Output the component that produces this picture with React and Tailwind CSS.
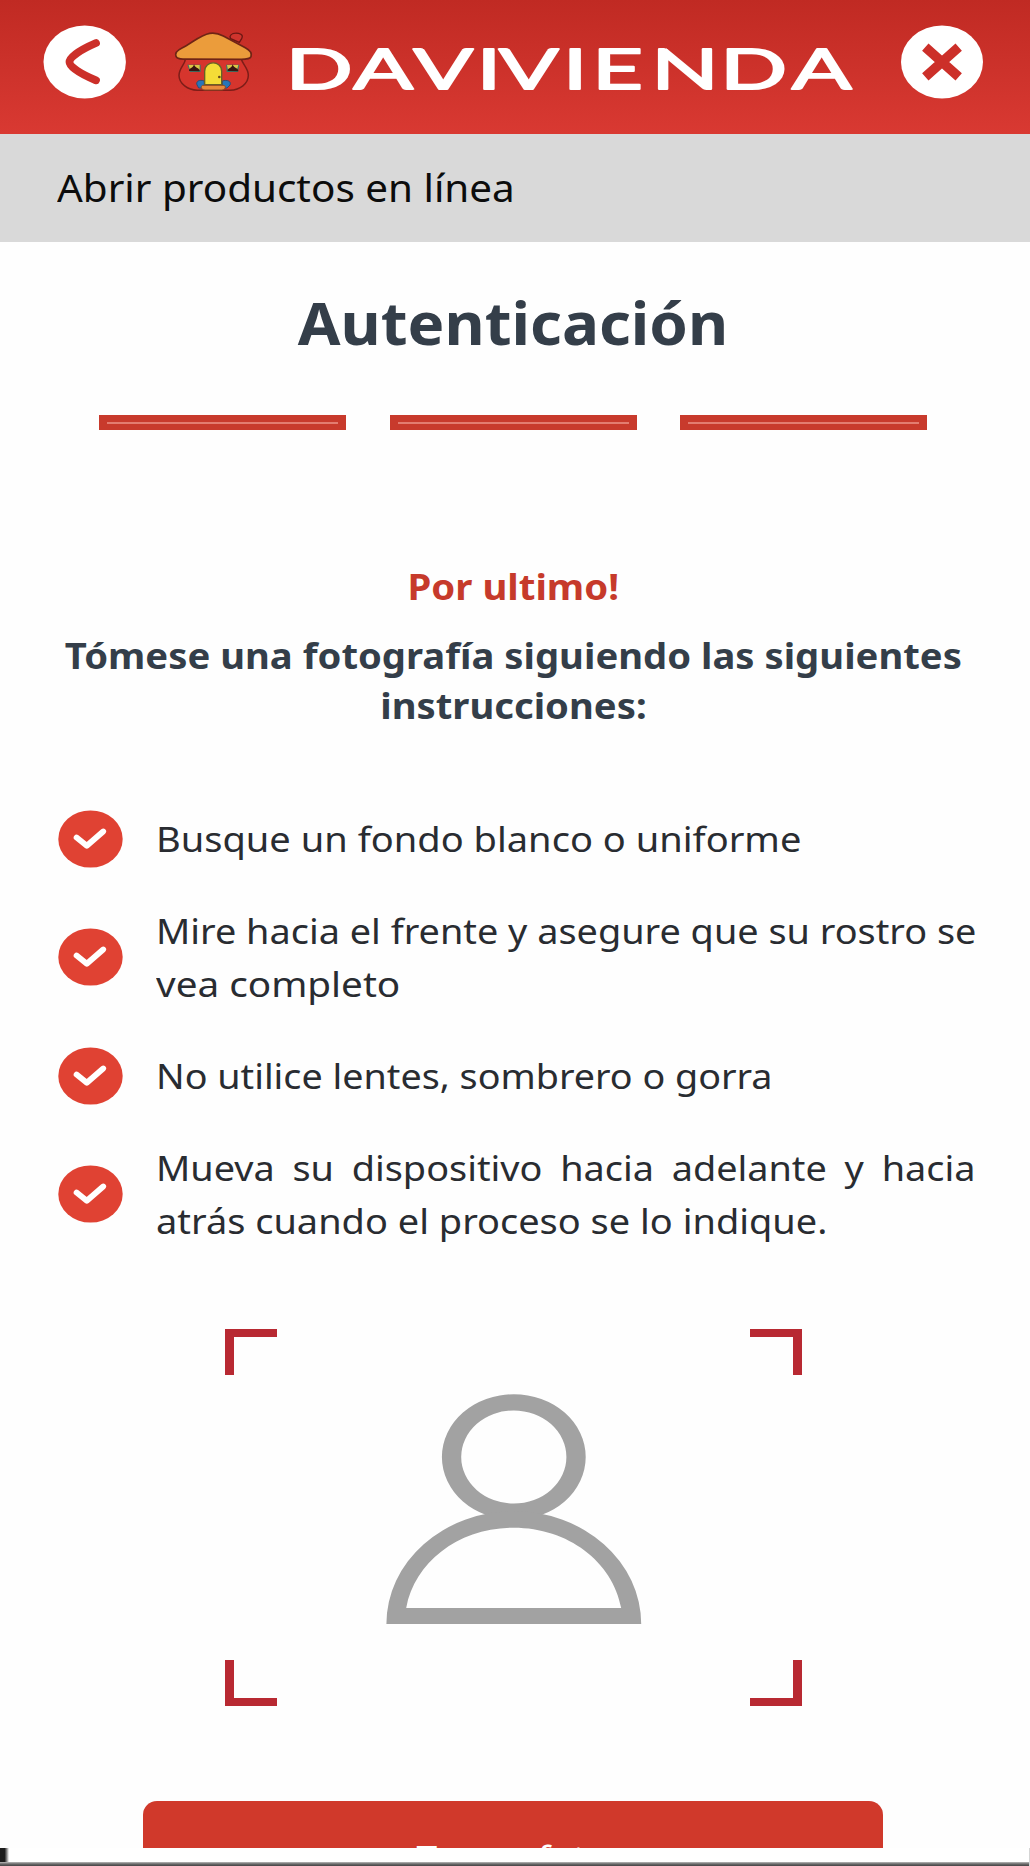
const instructions = [
  [{ text: "Busque un fondo blanco o uniforme", fit: "scale-x-[1.087]" }],
  [
    { text: "Mire hacia el frente y asegure que su rostro se", fit: "scale-x-[1.081]" },
    { text: "vea completo", fit: "scale-x-[1.105]" },
  ],
  [{ text: "No utilice lentes, sombrero o gorra", fit: "scale-x-[1.077]" }],
  [
    {
      text: "Mueva su dispositivo hacia adelante y hacia",
      fit: "w-[758px] scale-x-[1.081] [text-align-last:justify]",
    },
    { text: "atrás cuando el proceso se lo indique.", fit: "scale-x-[1.084]" },
  ],
];

function BackIcon() {
  return (
    <svg className="mt-[25px] ml-[43px] h-[74px] w-[84px] shrink-0" viewBox="0 0 84 74">
      <ellipse cx="41.7" cy="37" rx="41.2" ry="36.4" fill="#fff" />
      <path
        d="M53 18 C38 24.5 26.5 32 26.5 37 C26.5 42 38 49 53 55.3"
        fill="none"
        stroke="#cc2f29"
        strokeWidth="7.8"
        strokeLinecap="round"
      />
    </svg>
  );
}

function CloseIcon() {
  return (
    <svg className="mt-[25px] ml-[38px] h-[74px] w-[84px] shrink-0" viewBox="0 0 84 74">
      <ellipse cx="41" cy="37" rx="41" ry="36.4" fill="#fff" />
      <path d="M24.3 22.2 L57.7 51.8 M57.7 22.2 L24.3 51.8" stroke="#cc2f29" strokeWidth="9.6" />
    </svg>
  );
}

function HouseLogo() {
  return (
    <svg className="mt-[30px] ml-[45px] h-[66px] w-[86px] shrink-0" viewBox="516 90 258 198">
      <path
        d="M690 110 C692 101 704 98 716 100 C727 102 729 109 725 116 L718 127 L692 116 Z"
        fill="#cf342d"
        stroke="#6b1713"
        strokeWidth="4"
      />
      <path
        d="M556 177 C556 192 537 204 537 226 C537 252 564 270 592 271 L690 271 C720 269 745 252 745 226 C745 205 728 194 724 177 Z"
        fill="#d6352d"
        stroke="#7d1d18"
        strokeWidth="4.5"
      />
      <path
        d="M528 169 C524 160 532 151 546 144 C575 129 603 104 629 100 C646 97 657 101 670 108 L736 143 C749 150 757 159 753 170 C750 177 738 178 724 178 L556 177 C540 178 530 176 528 169 Z"
        fill="#eb9c3b"
        stroke="#6f2415"
        strokeWidth="5"
      />
      <path d="M562 194 H602 V216 H570 Z M678 194 H718 L714 216 H680 Z" fill="#3f7568" />
      <path d="M566 195 H599 V209 H570 Z M681 195 H715 L711 209 H684 Z" fill="#d9c545" />
      <path
        d="M567 213 C567 202 579 207 582 193 C586 206 599 203 599 214 Z M683 213 C683 202 695 207 698 193 C702 206 715 203 715 214 Z"
        fill="#391511"
      />
      <path
        d="M590 252 C590 239 606 240 613 243 L613 264 L596 264 Z M667 243 C681 238 695 244 690 255 L681 264 L667 264 Z"
        fill="#2875b9"
        stroke="#334b70"
        strokeWidth="3"
      />
      <path
        d="M614 254 V214 C614 180 665 180 665 214 V254 Z"
        fill="#f4dc37"
        stroke="#656326"
        strokeWidth="4"
      />
      <circle cx="658" cy="231" r="4" fill="#65491b" />
      <path
        d="M608 256 H672 C680 260 675 270 665 270 H615 C604 270 600 260 608 256 Z"
        fill="#e88a3c"
        stroke="#8b4a25"
        strokeWidth="3"
      />
    </svg>
  );
}

function Wordmark() {
  return (
    <svg
      className="mt-[20px] ml-[28px] h-[100px] w-[577px] shrink-0 overflow-visible"
      viewBox="285 20 577 100"
    >
      <text
        transform="scale(1.58 1)"
        x="180 223 261 301 315 355.5 374 411.5 455 500.5"
        y="88.8"
        fill="#fff"
        stroke="#fff"
        strokeWidth="1.8"
        strokeLinejoin="round"
        className="font-['Lato',sans-serif] text-[56px]"
      >
        DAVIVIENDA
      </text>
    </svg>
  );
}

function CheckIcon() {
  return (
    <svg className="-my-[3px] h-[58px] w-[65px] shrink-0" viewBox="0 0 65 58">
      <ellipse cx="32.5" cy="29" rx="32.2" ry="28.6" fill="#e04233" />
      <path
        d="M18.6 27.6 L28.8 35.8 L45.2 21.5"
        fill="none"
        stroke="#fff"
        strokeWidth="5.8"
        strokeLinecap="round"
        strokeLinejoin="round"
      />
    </svg>
  );
}

function Corner({ className }) {
  return <div className={`h-[46px] w-[52px] border-[#b82932] ${className}`} />;
}

function PersonIcon() {
  return (
    <svg className="mt-[65px] h-[230px] w-[256px]" viewBox="386 1393.5 256 230" fill="#a2a2a2" fillRule="evenodd">
      <path d="M441.9 1456.5 A71.9 62.8 0 1 1 585.7 1456.5 A71.9 62.8 0 1 1 441.9 1456.5 Z M461.2 1456.5 A52.6 46.5 0 1 0 566.4 1456.5 A52.6 46.5 0 1 0 461.2 1456.5 Z" />
      <path d="M386.4 1623.5 A127.4 112.8 0 0 1 641.2 1623.5 Z M406.2 1607.4 H621.2 C612.5 1561 568 1527.2 513.7 1527.2 C459 1527.2 415 1561 406.2 1607.4 Z" />
    </svg>
  );
}

export default function App() {
  return (
    <div className="flex h-[1866px] w-[1030px] flex-col overflow-hidden bg-[#fefefe] font-['Noto_Sans','Open_Sans',sans-serif]">
      <div className="flex h-[1848px] shrink-0 flex-col overflow-hidden">
        <header className="flex h-[134px] shrink-0 items-start bg-linear-to-b from-[#c02a23] to-[#d93932]">
          <BackIcon />
          <HouseLogo />
          <Wordmark />
          <CloseIcon />
        </header>

        <div className="flex h-[108px] shrink-0 items-start bg-[#d9d9d9] pt-[27px] pl-[57px]">
          <span className="origin-left scale-x-[1.036] text-[39px] leading-[51px] whitespace-nowrap text-[#0c0c0c]">
            Abrir productos en línea
          </span>
        </div>

        <h1 className="mt-[42px] w-[1026px] shrink-0 scale-x-[1.048] text-center text-[59px] leading-[76px] font-bold text-[#343e49]">
          Autenticación
        </h1>

        <div className="mt-[55px] flex shrink-0 gap-[43.5px] pl-[99px]">
          {[0, 1, 2].map((step) => (
            <div key={step} className="flex h-[15px] w-[247px] items-center bg-[#c83a2c] px-2">
              <div className="h-[2px] w-full bg-[#e37c70]" />
            </div>
          ))}
        </div>

        <div className="mt-[132px] flex w-[1026px] shrink-0 flex-col items-center text-[36px] leading-[50px] font-bold text-[#343e49]">
          <p className="scale-x-[1.065] text-[#c63a2b]">Por ultimo!</p>
          <p className="mt-[19px] scale-x-[1.062] whitespace-nowrap">
            Tómese una fotografía siguiendo las siguientes
          </p>
          <p className="scale-x-[1.062]">instrucciones:</p>
        </div>

        <ul className="mt-[81px] flex shrink-0 flex-col gap-[39px] pl-[58px]">
          {instructions.map((lines) => (
            <li key={lines[0].text} className="flex items-center gap-[33px]">
              <CheckIcon />
              <div className="flex flex-col items-start text-[35px] leading-[53px] whitespace-nowrap text-[#292c31]">
                {lines.map((line) => (
                  <span key={line.text} className={`block origin-left ${line.fit}`}>
                    {line.text}
                  </span>
                ))}
              </div>
            </li>
          ))}
        </ul>

        <div className="mt-[82px] ml-[225px] flex h-[377px] w-[577px] shrink-0 justify-between">
          <div className="flex flex-col justify-between">
            <Corner className="border-t-8 border-l-[9px]" />
            <Corner className="border-b-8 border-l-[9px]" />
          </div>
          <PersonIcon />
          <div className="flex flex-col justify-between">
            <Corner className="border-t-8 border-r-[9px]" />
            <Corner className="border-r-[9px] border-b-8" />
          </div>
        </div>

        <button className="mt-[95px] ml-[143px] flex h-[104px] w-[740px] shrink-0 items-start justify-center rounded-[14px] bg-[#d0392b] pt-[30px] text-white">
          <span className="scale-x-[1.06] text-[35px] leading-[53px]">Tomar foto</span>
        </button>
      </div>

      <div className="flex h-[18px] shrink-0 flex-col border-r border-[#d5d5d5] bg-white">
        <div className="h-[14px] w-[9px] bg-linear-to-r from-[#1c1c1c] from-50% to-white" />
        <div className="h-1 bg-linear-to-b from-[#bcbcbc] via-[#6a6a6a] to-[#454345]" />
      </div>
    </div>
  );
}
